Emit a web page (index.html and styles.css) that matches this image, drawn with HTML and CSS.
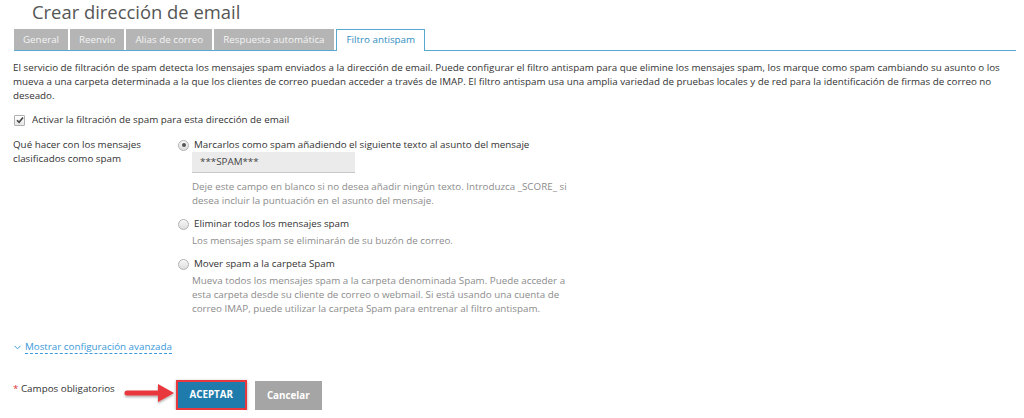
FILE: index.html
```html
<!DOCTYPE html>
<html lang="es">
<head>
  <meta charset="UTF-8">
  <meta name="viewport" content="width=device-width, initial-scale=1.0">
  <title>Crear dirección de email</title>
  <link rel="stylesheet" href="styles.css">
</head>
<body>
  <h1 class="page-title">Crear dirección de email</h1>

  <div class="tabs">
    <span class="tab">General</span>
    <span class="tab">Reenvío</span>
    <span class="tab">Alias de correo</span>
    <span class="tab">Respuesta automática</span>
    <span class="tab active">Filtro antispam</span>
  </div>

  <div class="content">
    <p class="intro">El servicio de filtración de spam detecta los mensajes spam enviados a la dirección de email. Puede configurar el filtro antispam para que elimine los mensajes spam, los marque como spam cambiando su asunto o los mueva a una carpeta determinada a la que los clientes de correo puedan acceder a través de IMAP. El filtro antispam usa una amplia variedad de pruebas locales y de red para la identificación de firmas de correo no deseado.</p>

    <div class="check-row">
      <span class="checkbox">
        <svg width="8" height="8" viewBox="0 0 8 8"><path d="M1 4.2 L3.1 6.3 L7 1.5" fill="none" stroke="#444" stroke-width="1.6"/></svg>
      </span>
      Activar la filtración de spam para esta dirección de email
    </div>

    <div class="form-row">
      <div class="field-label">Qué hacer con los mensajes clasificados como spam</div>
      <div class="options">
        <div class="option">
          <span class="radio checked"></span>
          Marcarlos como spam añadiendo el siguiente texto al asunto del mensaje
        </div>
        <div class="text-input">***SPAM***</div>
        <p class="hint first">Deje este campo en blanco si no desea añadir ningún texto. Introduzca _SCORE_ si desea incluir la puntuación en el asunto del mensaje.</p>

        <div class="option spaced">
          <span class="radio"></span>
          Eliminar todos los mensajes spam
        </div>
        <p class="hint">Los mensajes spam se eliminarán de su buzón de correo.</p>

        <div class="option spaced">
          <span class="radio"></span>
          Mover spam a la carpeta Spam
        </div>
        <p class="hint">Mueva todos los mensajes spam a la carpeta denominada Spam. Puede acceder a<br>esta carpeta desde su cliente de correo o webmail. Si está usando una cuenta de correo IMAP, puede utilizar la carpeta Spam para entrenar al filtro antispam.</p>
      </div>
    </div>

    <div class="advanced">
      <svg class="chevron" width="7" height="5" viewBox="0 0 7 5"><polyline points="0.5,0.8 3.5,3.8 6.5,0.8" fill="none" stroke="#3a9ad9" stroke-width="1"/></svg>
      <span class="advanced-link">Mostrar configuración avanzada</span>
    </div>

    <div class="footer">
      <span class="required"><span class="star">*</span> Campos obligatorios</span>
      <svg class="arrow" width="54" height="26" viewBox="0 0 54 26">
        <defs>
          <filter id="sh" x="-20%" y="-40%" width="140%" height="180%">
            <feDropShadow dx="0" dy="1.5" stdDeviation="1.2" flood-color="#000" flood-opacity="0.35"/>
          </filter>
        </defs>
        <path d="M4 10.5 L35 10.5 L35 4 L51 13 L35 22 L35 15.5 L4 15.5 Q1.5 15.5 1.5 13 Q1.5 10.5 4 10.5 Z" fill="#e8383d" filter="url(#sh)"/>
      </svg>
      <div class="btn-accept-wrap">
        <span class="btn btn-accept">ACEPTAR</span>
      </div>
      <span class="btn btn-cancel">Cancelar</span>
    </div>
  </div>
</body>
</html>
```

FILE: styles.css
```css
body {
  font-family: 'Open Sans', 'DejaVu Sans', sans-serif;
  font-size: 9.8px;
  line-height: 14px;
  color: #3a3a3a;
  background-color: #fff;
  margin: 0;
  padding: 0;
}
.page-title {
  margin: 0 0 5px 0;
  padding-left: 32px;
  font-size: 18.4px;
  line-height: 24px;
  font-weight: 400;
  color: #555;
}
.tabs {
  display: flex;
  gap: 2px;
  margin: 0 8px 0 14px;
  border-bottom: 1px solid #5aa8cf;
  height: 21px;
}
.tab {
  background-color: #b5b5b5;
  color: #f4f4f4;
  padding: 0 9px;
  line-height: 21px;
  height: 21px;
  box-sizing: border-box;
}
.tab.active {
  background-color: #fff;
  color: #2f8cc2;
  border: 1px solid #5aa8cf;
  border-bottom: none;
  height: 22px;
  line-height: 20px;
  padding: 0 9px 0 10px;
}
.content {
  padding: 0 8px 0 13px;
}
.intro {
  margin: 10px 0 0 0;
  color: #333;
}
.check-row {
  margin-top: 10px;
  display: flex;
  align-items: center;
  gap: 7px;
  color: #333;
}
.checkbox {
  width: 9px;
  height: 9px;
  border: 1px solid #b0b0b0;
  border-radius: 1px;
  background: linear-gradient(#fff, #e6e6e6);
  display: flex;
  align-items: center;
  justify-content: center;
  margin-left: 1px;
}
.form-row {
  margin-top: 11px;
  display: flex;
}
.field-label {
  width: 140px;
  padding-right: 25px;
  color: #333;
}
.options {
  flex: 1;
}
.option {
  display: flex;
  align-items: center;
  gap: 5px;
  color: #333;
}
.option.spaced {
  margin-top: 9px;
}
.radio {
  width: 9px;
  height: 9px;
  border: 1px solid #b3b3b3;
  border-radius: 50%;
  background: linear-gradient(#f8f8f8, #dcdcdc);
  display: inline-flex;
  align-items: center;
  justify-content: center;
}
.radio.checked::after {
  content: '';
  width: 4px;
  height: 4px;
  border-radius: 50%;
  background-color: #555;
}
.text-input {
  margin-left: 14px;
  width: 155px;
  height: 20px;
  padding-left: 8px;
  background-color: #ebebeb;
  border-bottom: 1px solid #c8c8c8;
  line-height: 20px;
  color: #444;
}
.hint {
  margin: 3px 0 0 14px;
  color: #8c8c8c;
  max-width: 382px;
}
.hint.first {
  margin-top: 7px;
}
.advanced {
  margin-top: 24px;
  display: flex;
  align-items: center;
  gap: 4px;
}
.chevron {
  margin-left: 1px;
}
.advanced-link {
  color: #3a9ad9;
  border-bottom: 1px dashed #3a9ad9;
  line-height: 13px;
}
.footer {
  margin-top: 26px;
  display: flex;
  align-items: flex-start;
}
.required {
  margin-top: 2px;
  color: #333;
}
.star {
  color: #e0383d;
}
.arrow {
  margin: 0 -1px 0 8px;
}
.btn-accept-wrap {
  border: 2px solid #e8383d;
  box-shadow: 0 1px 3px rgba(0,0,0,0.35);
}
.btn {
  display: inline-block;
  font-weight: 700;
  color: #fff;
  text-align: center;
}
.btn-accept {
  background-color: #1f7bab;
  width: 67px;
  height: 26px;
  line-height: 26px;
  display: block;
}
.btn-cancel {
  background-color: #a5a5a5;
  width: 67px;
  height: 29px;
  line-height: 29px;
  margin-left: 8px;
  margin-top: 1px;
}
```
